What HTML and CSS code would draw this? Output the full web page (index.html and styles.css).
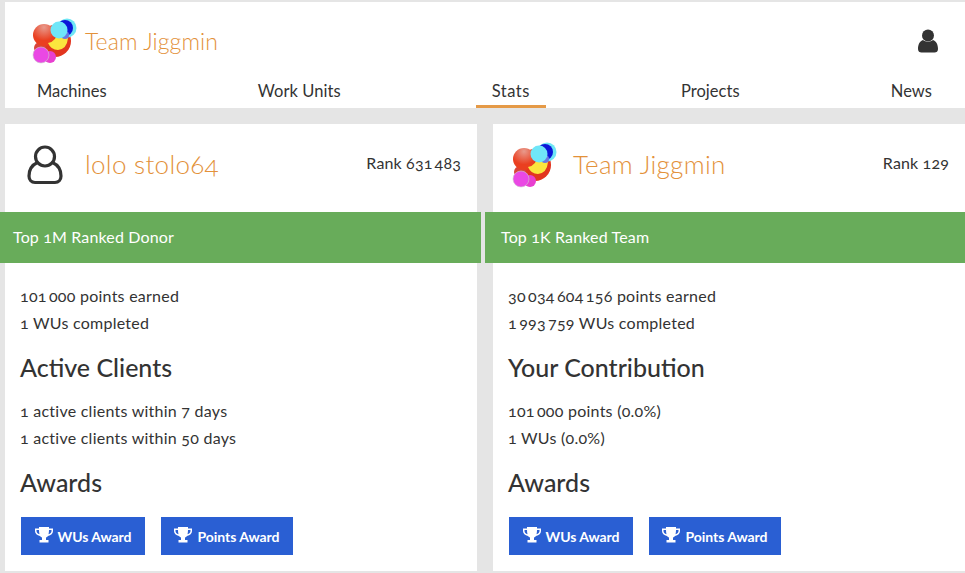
FILE: index.html
```html
<!DOCTYPE html>
<html lang="en">
<head>
<meta charset="utf-8">
<title>Team Jiggmin</title>
<link rel="stylesheet" href="styles.css">
</head>
<body>
<svg class="defs" width="0" height="0" aria-hidden="true">
  <defs>
    <radialGradient id="shine" cx="50%" cy="15%" r="60%">
      <stop offset="0" stop-color="#e89a8c"/>
      <stop offset="1" stop-color="#ea3f20"/>
    </radialGradient>
    <g id="logo">
      <circle cx="23" cy="23" r="16" fill="#e2351f"/>
      <circle cx="18" cy="39" r="6" fill="#e83fd0"/>
      <circle cx="8" cy="30" r="6" fill="#d8443a"/>
      <circle cx="12" cy="17" r="11" fill="url(#shine)"/>
      <circle cx="9" cy="37" r="8" fill="#ea48e4" stroke="#ccc" stroke-width=".6"/>
      <path d="M16 25 Q24 24 27 12 L36 20 Q35 31 26 32 Q19 32 16 25Z" fill="#fbe53e"/>
      <circle cx="35" cy="10" r="9.500" fill="#6fe6f5"/>
      <circle cx="33" cy="10" r="8" fill="#0b16d8"/>
      <circle cx="33" cy="17" r="4" fill="#6a78e0"/>
      <circle cx="27" cy="12" r="8.500" fill="#6fe6f8"/>
    </g>
  </defs>
</svg>
<header class="site-header">
  <div class="brand-row">
    <a class="brand">
      <svg class="logo" viewBox="0 0 46 46"><use href="#logo"/></svg>
      <span class="brand-name">Team Jiggmin</span>
    </a>
    <svg class="user-solid" viewBox="0 0 20 24"><circle cx="10" cy="6.500" r="6"/><path d="M0 20c0-5 2-8 5-9 1.500 1.200 3 1.700 5 1.700s3.500-.5 5-1.700c3 1 5 4 5 9 0 2.500-1.500 3.500-3.500 3.500h-13C1.500 23.500 0 22.500 0 20z"/></svg>
  </div>
  <nav class="tabs">
    <a class="tab">Machines</a>
    <a class="tab">Work Units</a>
    <a class="tab active">Stats</a>
    <a class="tab">Projects</a>
    <a class="tab">News</a>
  </nav>
</header>
<main class="cards">
  <section class="card">
    <div class="card-head">
      <svg class="avatar" viewBox="0 0 36 40"><circle cx="18" cy="11.500" r="9.500"/><path d="M10.500 17.500C5 20 2 25 2 31c0 4 2.500 6.500 6 6.500h20c3.500 0 6-2.500 6-6.500 0-6-3-11-8.500-13.500"/></svg>
      <h2 class="card-title">lolo stolo64</h2>
      <span class="rank">Rank 631&#8201;483</span>
    </div>
    <div class="banner">Top 1M Ranked Donor</div>
    <div class="card-body">
      <p>101&#8201;000 points earned</p>
      <p>1 WUs completed</p>
      <h3>Active Clients</h3>
      <p>1 active clients within 7 days</p>
      <p>1 active clients within 50 days</p>
      <h3>Awards</h3>
      <div class="awards">
        <a class="award"><svg class="trophy" viewBox="0 0 18 16"><path d="M4 0h10v1.500h4V4c0 2.500-2 4.500-5 5-.6.8-1.300 1.300-2 1.600V13h2.500v2.500h-9V13H7v-2.400c-.7-.3-1.400-.8-2-1.600C2 8.500 0 6.500 0 4V1.500h4V0zM1.500 3v1c0 1.500 1.100 2.800 3 3.300C4.200 6 4 4.600 4 3H1.500zm15 0H14c0 1.600-.2 3-.5 4.300 1.900-.5 3-1.800 3-3.300V3z"/></svg>WUs Award</a>
        <a class="award"><svg class="trophy" viewBox="0 0 18 16"><path d="M4 0h10v1.500h4V4c0 2.500-2 4.500-5 5-.6.8-1.300 1.300-2 1.600V13h2.500v2.500h-9V13H7v-2.400c-.7-.3-1.400-.8-2-1.600C2 8.500 0 6.500 0 4V1.500h4V0zM1.500 3v1c0 1.500 1.100 2.800 3 3.300C4.200 6 4 4.600 4 3H1.500zm15 0H14c0 1.600-.2 3-.5 4.300 1.900-.5 3-1.800 3-3.300V3z"/></svg>Points Award</a>
      </div>
    </div>
  </section>
  <section class="card">
    <div class="card-head">
      <svg class="logo" viewBox="0 0 46 46"><use href="#logo"/></svg>
      <h2 class="card-title">Team Jiggmin</h2>
      <span class="rank">Rank 129</span>
    </div>
    <div class="banner">Top 1K Ranked Team</div>
    <div class="card-body">
      <p>30&#8201;034&#8201;604&#8201;156 points earned</p>
      <p>1&#8201;993&#8201;759 WUs completed</p>
      <h3>Your Contribution</h3>
      <p>101&#8201;000 points (0.0%)</p>
      <p>1 WUs (0.0%)</p>
      <h3>Awards</h3>
      <div class="awards">
        <a class="award"><svg class="trophy" viewBox="0 0 18 16"><path d="M4 0h10v1.500h4V4c0 2.500-2 4.500-5 5-.6.8-1.300 1.300-2 1.600V13h2.500v2.500h-9V13H7v-2.400c-.7-.3-1.400-.8-2-1.600C2 8.500 0 6.500 0 4V1.500h4V0zM1.500 3v1c0 1.500 1.100 2.800 3 3.300C4.200 6 4 4.600 4 3H1.500zm15 0H14c0 1.600-.2 3-.5 4.300 1.900-.5 3-1.800 3-3.300V3z"/></svg>WUs Award</a>
        <a class="award"><svg class="trophy" viewBox="0 0 18 16"><path d="M4 0h10v1.500h4V4c0 2.500-2 4.500-5 5-.6.8-1.300 1.300-2 1.600V13h2.500v2.500h-9V13H7v-2.400c-.7-.3-1.400-.8-2-1.600C2 8.500 0 6.500 0 4V1.500h4V0zM1.500 3v1c0 1.500 1.100 2.800 3 3.300C4.200 6 4 4.600 4 3H1.500zm15 0H14c0 1.600-.2 3-.5 4.300 1.900-.5 3-1.800 3-3.300V3z"/></svg>Points Award</a>
      </div>
    </div>
  </section>
</main>
</body>
</html>
```
FILE: styles.css
```css
* { box-sizing: border-box; }
html, body { margin: 0; height: 100%; overflow: hidden; }
body {
  background: #e5e5e5;
  color: #333;
  font-family: Lato, "Open Sans", sans-serif;
  font-feature-settings: "onum";
  font-size: 16px;
  padding: 2px 0 0 5px;
}
.defs { position: absolute; }
.site-header { background: #fff; height: 106px; display: flex; flex-direction: column; }
.brand-row { display: flex; align-items: center; justify-content: space-between; height: 76px; padding: 2px 27px 0 27px; }
.brand { display: flex; align-items: center; gap: 7px; }
.logo { width: 46px; height: 46px; flex: none; }
.brand-name { font-size: 23px; letter-spacing: .1px; color: #e3913a; font-weight: 300; }
.user-solid { width: 20px; height: 24px; fill: #333; }
.tabs { display: flex; justify-content: space-between; padding: 0 17px 0 16px; flex: 1; }
.tab { padding: 2px 16px 0; font-size: 16.500px; line-height: 22px; letter-spacing: .05px; border-bottom: 3px solid transparent; }
.tab.active { border-bottom-color: #e59a47; letter-spacing: .5px; }
.cards { display: grid; grid-template-columns: 472px 472px; column-gap: 16px; margin-top: 16px; }
.card { background: #fff; height: 447px; display: flex; flex-direction: column; }
.card-head { height: 88px; display: flex; align-items: center; padding: 0 16px 6px 19px; }
.card-title { margin: 0 0 2px 15px; font-size: 26px; letter-spacing: .3px; font-weight: 300; color: #e3913a; flex: 1; }
.rank { font-size: 16px; margin-bottom: 5px; letter-spacing: .15px; }
.avatar { width: 36px; height: 40px; margin-left: 3px; margin-right: 7px; fill: none; stroke: #333; stroke-width: 3.200; }
.banner { background: #68ac5a; color: #fff; height: 51px; line-height: 49px; padding-left: 13px; margin: 0 -4px 0 -5px; font-size: 16px; letter-spacing: .15px; }
.card:last-child .banner { margin-left: -8px; margin-right: 0; padding-left: 16px; }
.card-body { padding: 19px 15px 0; }
.card-body p { margin: 0; font-size: 16px; line-height: 27px; letter-spacing: .25px; }
.card-body h3 { margin: 16px 0 15px; font-size: 25px; line-height: 30px; font-weight: 500; }
.awards { display: flex; gap: 16px; margin-left: 1px; padding-top: 5px; }
.award { display: flex; align-items: center; justify-content: center; gap: 5px; height: 38px; padding: 0 13.500px; background: #2a5fd3; color: #fff; font-size: 14px; font-weight: 700; letter-spacing: -.05px; }
.trophy { width: 18px; height: 16px; fill: #fff; margin-top: -3px; }
```
